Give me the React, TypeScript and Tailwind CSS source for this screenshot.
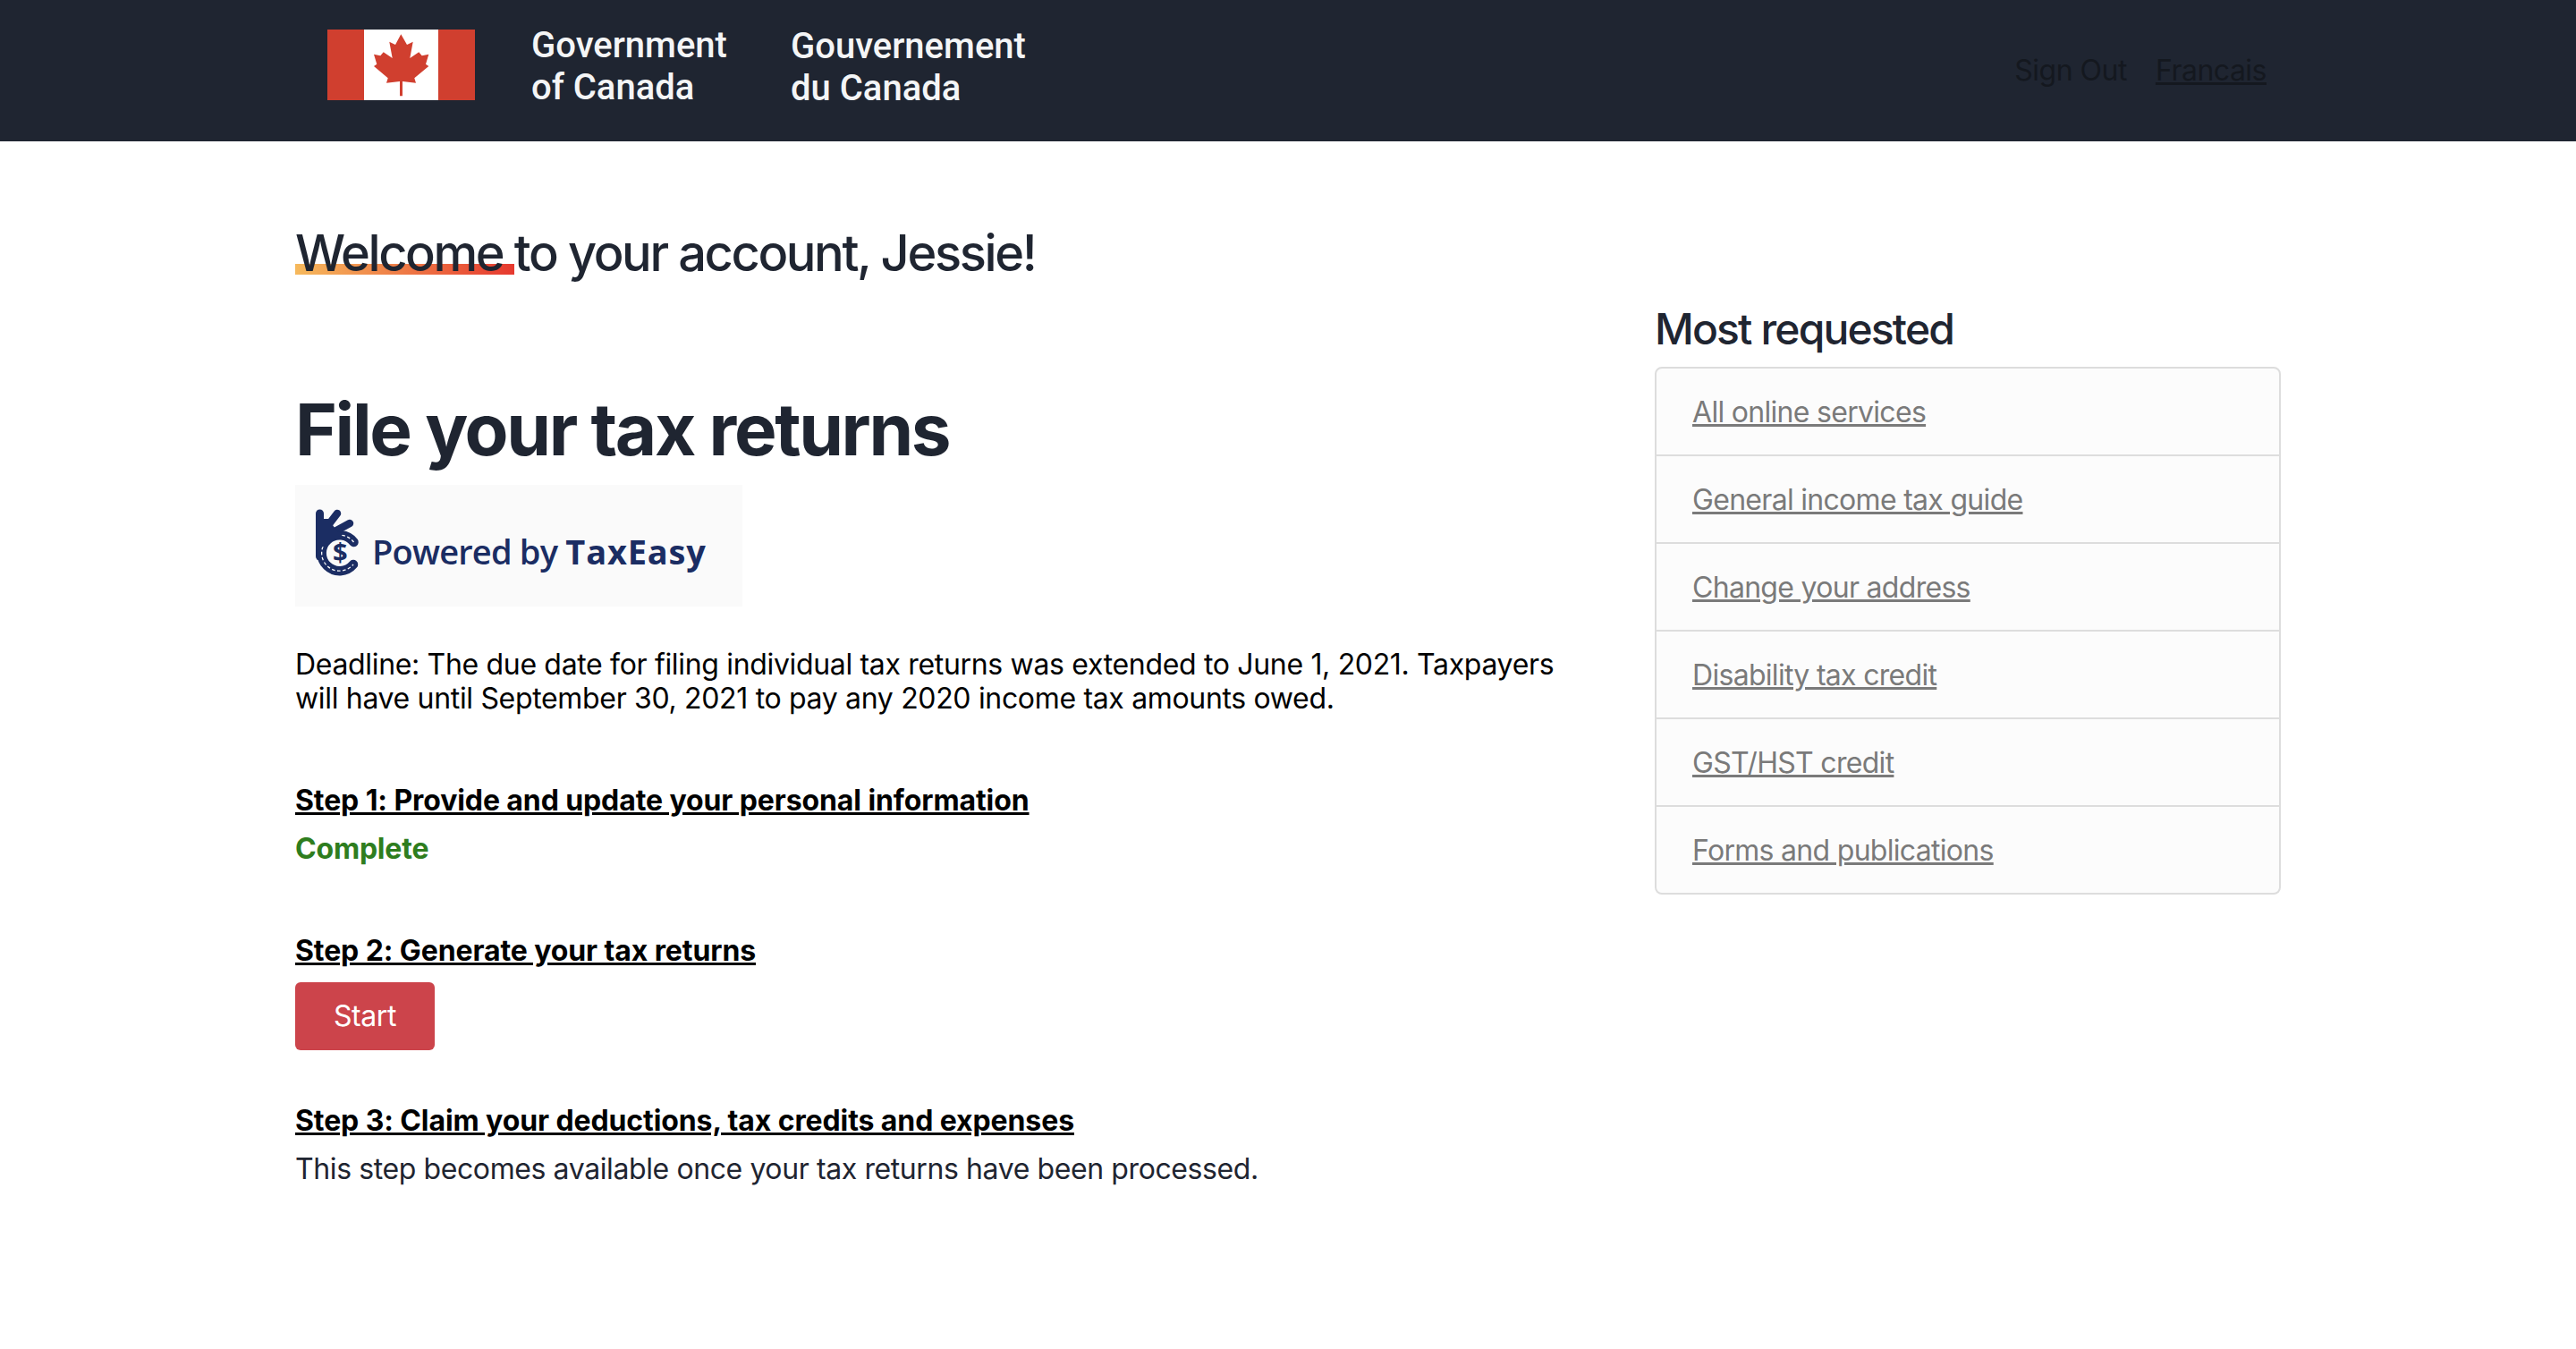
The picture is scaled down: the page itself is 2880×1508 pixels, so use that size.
const links = ["All online services","General income tax guide","Change your address","Disability tax credit","GST/HST credit","Forms and publications"];

function Flag() {
  return (
    <svg width="165" height="79" viewBox="0 0 165 79" className="block shrink-0">
      <rect width="165" height="79" fill="#fff" />
      <rect width="41" height="79" fill="#d03f2f" />
      <rect x="124" width="41" height="79" fill="#d03f2f" />
      <polygon fill="#d03f2f" points="82.300,5.300 89,17 95.700,13.700 92.300,32 102.300,25.300 105.700,29.300 113.300,27.700 110,38.700 113.300,41 97.300,54.300 99,59.700 84,58 84,74.300 81,74.300 81,58 66,59.700 67.700,54.300 52,41 55.300,38.700 52,27.700 59.300,29.300 62.700,25.300 72.700,32 69.300,13.700 76,17" />
    </svg>
  );
}

function TaxLogo() {
  return (
    <svg width="70" height="90" viewBox="0 0 70 90" className="block shrink-0">
      <g fill="none" stroke="#1b2d63" strokeLinecap="round">
        <path d="M12.500 14V62" strokeWidth="9" />
        <path d="M19 31L32 14" strokeWidth="8.500" />
        <path d="M24 37L46 25" strokeWidth="8.500" />
        <path d="M50.500 46A20 20 0 1 0 50 71" strokeWidth="10.500" />
        <path d="M50.500 46A20 20 0 1 0 50 71" stroke="#fafafa" strokeWidth="1.300" strokeDasharray="3.500 2.500" strokeLinecap="butt" />
      </g>
      <path fill="#1b2d63" d="M8 20h14l10 14 8 2-16 10-16 10z" />
      <text x="35" y="68" textAnchor="middle" fontSize="29" fontWeight="700" fill="#1b2d63" fontFamily="'Open Sans', sans-serif">$</text>
    </svg>
  );
}

export default function App() {
  return (
    <div className="min-h-[1508px] bg-white text-[32px] leading-[38.4px] tracking-[-0.4px] text-[#1f2531]" style={{fontFamily:"Inter, sans-serif"}}>
      <header className="h-[158px] bg-[#1f2531]">
        <div className="mx-auto flex h-[158px] w-[2280px] items-start pl-[66px] pr-[46px]">
          <div className="mt-[33px]"><Flag /></div>
          <div className="ml-[63px] mt-[27px] w-[290px] text-[40px] leading-[47px] font-medium tracking-normal text-[#f4f5f6]" style={{fontFamily:"Roboto, sans-serif"}}>Government<br/>of Canada</div>
          <div className="mt-[28px] text-[40px] leading-[47px] font-medium tracking-normal text-[#f4f5f6]" style={{fontFamily:"Roboto, sans-serif"}}>Gouvernement<br/>du Canada</div>
          <nav className="ml-auto mt-[60px] flex gap-[32px] tracking-[-0.5px] text-[#14181f]">
            <a>Sign Out</a>
            <a className="underline">Francais</a>
          </nav>
        </div>
      </header>
      <main className="mx-auto flex w-[2280px] gap-[60px] px-[30px]">
        <section className="w-[1460px]">
          <h2 className="mt-[93px] text-[56px] leading-[64px] font-medium tracking-[-2.4px]">
            <span className="bg-[linear-gradient(90deg,#f6b95c,#e6392f)] bg-no-repeat bg-[length:100%_12px] bg-[position:0_calc(100%-10px)]">Welcome </span>to your account, Jessie!
          </h2>
          <h1 className="mt-[117px] text-[80px] leading-[96px] font-bold tracking-[-2.35px]">File your tax returns</h1>
          <div className="mt-[14px] flex h-[136px] w-[500px] items-start bg-[#fafafa] pl-[15px] pt-[18px]">
            <TaxLogo />
            <div className="ml-[1px] mt-[30px] whitespace-nowrap text-[38px] leading-[52px] font-semibold tracking-[-0.8px] text-[#1b2d63]" style={{fontFamily:"'Open Sans', sans-serif"}}>Powered by <span className="font-bold tracking-[0.8px]">TaxEasy</span></div>
          </div>
          <p className="mt-[46px] max-w-[1436px] tracking-[-0.33px] text-black">Deadline: The due date for filing individual tax returns was extended to June 1, 2021. Taxpayers will have until September 30, 2021 to pay any 2020 income tax amounts owed.</p>
          <h3 className="mt-[75px] font-bold tracking-[-0.1px] text-black underline">Step 1: Provide and update your personal information</h3>
          <p className="mt-[16px] font-bold tracking-[-0.2px] text-[#2e7d1e]">Complete</p>
          <h3 className="mt-[75px] font-bold tracking-[-0.1px] text-black underline">Step 2: Generate your tax returns</h3>
          <button className="mt-[16px] block h-[76px] w-[156px] rounded-[6px] bg-[#cc444b] text-white">Start</button>
          <h3 className="mt-[60px] font-bold tracking-[-0.1px] text-black underline">Step 3: Claim your deductions, tax credits and expenses</h3>
          <p className="mt-[16px]">This step becomes available once your tax returns have been processed.</p>
        </section>
        <aside className="w-[700px] pt-[182px]">
          <h2 className="text-[48px] leading-[56px] font-medium tracking-[-1.85px]">Most requested</h2>
          <ul className="mt-[14px] rounded-[8px] border-2 border-[#dddddd] bg-[#fcfcfc]">
            {links.map((l, i) => (
              <li key={l} className={i < 5 ? "flex h-[98px] items-center border-b-2 border-[#dddddd] pl-[40px] pt-[2px] tracking-[-0.7px] text-[#7a7a7a]" : "flex h-[96px] items-center pl-[40px] pt-[2px] tracking-[-0.7px] text-[#7a7a7a]"}>
                <a className="underline">{l}</a>
              </li>
            ))}
          </ul>
        </aside>
      </main>
    </div>
  );
}
